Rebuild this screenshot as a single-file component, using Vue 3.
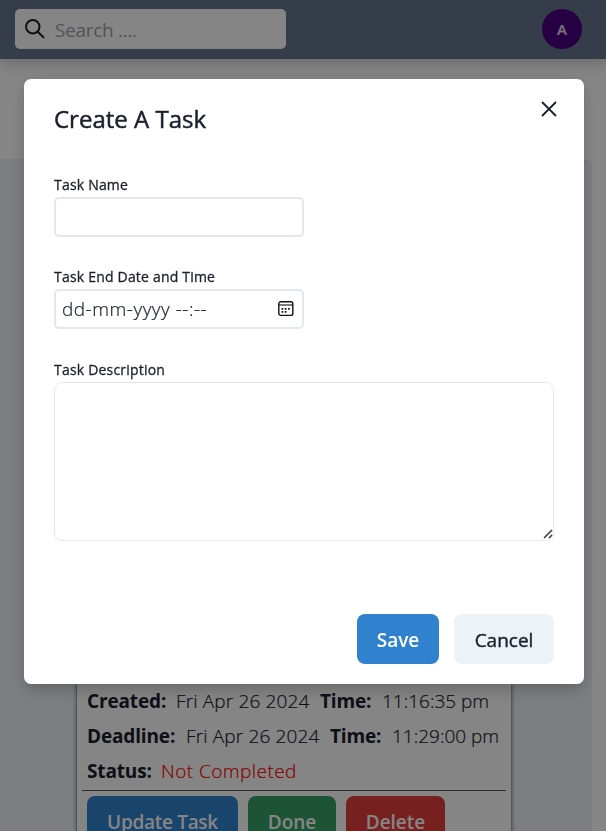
<script setup>
import { ref } from 'vue'

const name = ref('')
const description = ref('')
const rows = [
  { label: 'Created:', date: 'Fri Apr 26 2024', time: '11:16:35 pm', wide: false },
  { label: 'Deadline:', date: 'Fri Apr 26 2024', time: '11:29:00 pm', wide: true }
]
</script>

<template>
  <div class="page">
    <header class="navbar">
      <div class="search">
        <svg class="search-icon" viewBox="0 0 20 20" width="20" height="20">
          <circle cx="7.8" cy="7.7" r="6.7" />
          <path d="M12.6 12.5 L19 18.9" />
        </svg>
        <span class="placeholder">Search ....</span>
      </div>
      <div class="avatar">A</div>
    </header>
    <main class="board">
      <article class="task">
        <div v-for="row in rows" :key="row.label" class="row">
          <b :class="row.wide ? 'deadline' : 'created'">{{ row.label }}</b>
          <span class="date">{{ row.date }}</span>
          <b class="time-label">Time:</b>
          <span class="time">{{ row.time }}</span>
        </div>
        <div class="row">
          <b class="status-label">Status:</b>
          <span class="status">Not Completed</span>
        </div>
        <div class="actions">
          <button class="btn update">Update Task</button>
          <button class="btn done">Done</button>
          <button class="btn delete">Delete</button>
        </div>
      </article>
    </main>
  </div>
  <div class="overlay">
    <section class="modal">
      <div class="modal-head">
        <h2>Create A Task</h2>
        <svg class="close" viewBox="0 0 16 16" width="16" height="16">
          <path d="M1 1 L15 15 M15 1 L1 15" />
        </svg>
      </div>
      <div class="field">
        <label>Task Name</label>
        <input v-model="name" class="box" type="text" />
      </div>
      <div class="field">
        <label>Task End Date and Time</label>
        <div class="box date-box">
          <span class="date-text">dd-mm-yyyy --:--</span>
          <svg viewBox="0 0 16 16" width="16" height="16">
            <rect x="0.8" y="0.8" width="14" height="13.6" rx="2" fill="none" stroke="#111" stroke-width="1.4" />
            <path d="M1 4H15" stroke="#111" stroke-width="1.1" />
            <path d="M3.6 7.8h1.7M6.8 7.8h1.7M10 7.8h1.7M3.6 10.9h1.7M6.8 10.9h1.7" stroke="#111" stroke-width="1.7" />
          </svg>
        </div>
      </div>
      <div class="field">
        <label>Task Description</label>
        <div class="area-wrap">
          <textarea v-model="description"></textarea>
          <svg class="grip" viewBox="0 0 10 10" width="10" height="10">
            <path d="M1 9 L9 1 M6 9 L9 6" />
          </svg>
        </div>
      </div>
      <div class="modal-foot">
        <button class="btn save">Save</button>
        <button class="btn cancel">Cancel</button>
      </div>
    </section>
  </div>
</template>

<style>
body {
  background: #fff;
  overflow: hidden;
}
</style>

<style scoped>
* {
  box-sizing: border-box;
}
.page,
.overlay {
  font-family: "Open Sans", "Noto Sans", sans-serif;
  color: #1a202c;
  white-space: nowrap;
}
.page {
  height: 831px;
  overflow: hidden;
}
.navbar {
  height: 59px;
  padding: 0 24px 1px 15px;
  display: flex;
  align-items: center;
  justify-content: space-between;
  background: #68758e;
  box-shadow: 0 4px 14px rgba(0, 0, 0, 0.22);
}
.search {
  width: 271px;
  height: 40px;
  padding: 0 10px;
  display: flex;
  align-items: center;
  gap: 10px;
  background: #fff;
  border-radius: 5px;
}
.search-icon {
  fill: none;
  stroke: #1a202c;
  stroke-width: 2;
}
.placeholder {
  padding-top: 2px;
  font-size: 19px;
  letter-spacing: -0.3px;
  color: #a0a3a9;
}
.avatar {
  width: 40px;
  height: 40px;
  border-radius: 50%;
  background: #4b0082;
  color: #e6dcec;
  font: 600 15px/41px "Open Sans", sans-serif;
  text-align: center;
  -webkit-text-stroke: 0.2px;
}
.board {
  width: 592px;
  height: 700px;
  margin-top: 100px;
  padding: 524px 81px 0 77px;
  background: #edf2f7;
  border-radius: 0 8px 0 0;
}
.task {
  height: 300px;
  background: #fff;
  padding: 0 5px;
  box-shadow: 0 0 4px #2d3748;
}
.row {
  height: 35px;
  padding-left: 5px;
  display: flex;
  align-items: center;
  gap: 10px;
  font-size: 19px;
  font-weight: 300;
}
.row b {
  font-weight: 700;
  letter-spacing: -0.15px;
}
.row span {
  -webkit-text-stroke: 0.2px;
}
.created { width: 79px; }
.deadline { width: 89px; }
.date {
  width: 134px;
  letter-spacing: 0.15px;
}
.time-label { width: 52px; }
.status-label { width: 64px; }
.status {
  color: #f00;
  letter-spacing: 0.45px;
}
.actions {
  margin-top: 2px;
  padding: 5px 5px 0;
  display: flex;
  gap: 10px;
  border-top: 1px solid #555;
}
.btn {
  height: 50px;
  padding: 2px 0 0;
  border: 0;
  border-radius: 8px;
  font-family: inherit;
  font-size: 19px;
  font-weight: 600;
  color: #fff;
}
.update {
  width: 151px;
  background: #3182ce;
  letter-spacing: -0.3px;
}
.done { width: 88px; background: #38a169; }
.delete { width: 99px; background: #e53e3e; }
.overlay {
  position: fixed;
  inset: 0;
  padding: 79px 22px 0 24px;
  background: rgba(0, 0, 0, 0.48);
}
.modal {
  height: 605px;
  padding: 0 30px 20px;
  display: flex;
  flex-direction: column;
  background: #fff;
  border-radius: 7px;
  box-shadow: 0 10px 15px -3px rgba(0, 0, 0, 0.1), 0 4px 16px rgba(0, 0, 0, 0.14);
}
.modal-head {
  height: 98px;
  padding-top: 22px;
  display: flex;
  justify-content: space-between;
}
h2 {
  margin: 0;
  font-size: 24px;
  line-height: 36px;
  font-weight: 400;
  -webkit-text-stroke: 0.5px;
}
.close {
  margin: 0 -2.5px 0 0;
  fill: none;
  stroke: #1a202c;
  stroke-width: 1.8;
}
.field {
  display: flex;
  flex-direction: column;
  margin-bottom: 32px;
}
.field + .field {
  margin-bottom: 33px;
}
label {
  height: 20px;
  font-size: 14px;
  line-height: 16px;
  letter-spacing: 0.2px;
  -webkit-text-stroke: 0.3px;
}
.box {
  width: 250px;
  height: 40px;
  border: 2px solid #e2e8f0;
  border-radius: 5px;
  outline: none;
}
.date-box {
  padding: 0 8px 0 6px;
  display: flex;
  align-items: center;
  justify-content: space-between;
  font-size: 19px;
  font-weight: 300;
}
.date-text {
  letter-spacing: 0.5px;
  -webkit-text-stroke: 0.2px;
}
.area-wrap {
  display: flex;
  position: relative;
}
textarea {
  width: 500px;
  height: 159px;
  border: 1px solid #e2e8f0;
  border-radius: 8px;
  resize: none;
  outline: none;
}
.grip {
  position: absolute;
  right: 1px;
  bottom: 2px;
  fill: none;
  stroke: #333;
  stroke-width: 1.5;
}
.modal-foot {
  margin-top: auto;
  display: flex;
  justify-content: flex-end;
  gap: 15px;
}
.save { width: 82px; background: #3182ce; }
.cancel {
  width: 100px;
  background: #edf2f7;
  color: #1a202c;
  font-weight: 400;
  -webkit-text-stroke: 0.4px;
}
</style>
